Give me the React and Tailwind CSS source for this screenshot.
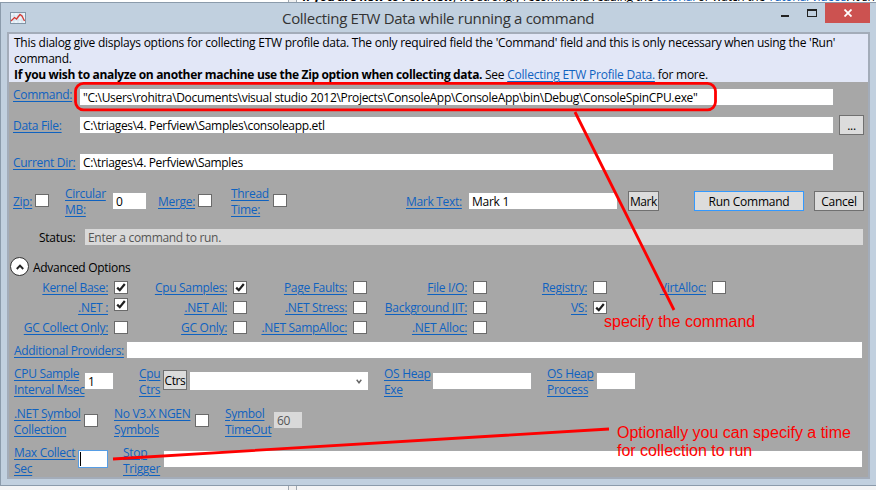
import React from 'react';
import clsx from 'clsx';

function Link({ className, lines, right }) {
  return (
    <div className={clsx('shrink-0 whitespace-nowrap tracking-[-0.3px] text-[#0f62c0]', right && 'text-right', className)}>
      {lines.map((l) => (
        <div key={l} className="h-4 leading-[18px]">
          <span className="underline decoration-1 underline-offset-[1.5px]">{l}</span>
        </div>
      ))}
    </div>
  );
}

function Field({ className, children, disabled }) {
  return (
    <div
      className={clsx(
        'h-4 shrink-0 whitespace-nowrap pl-[3px] leading-[18px]',
        disabled ? 'bg-[#d9d9d9] text-[#555]' : 'bg-white shadow-[0_0_0_1px_#abadb333]',
        className
      )}
    >
      {children}
    </div>
  );
}

function Check({ className, on }) {
  return (
    <div className={clsx('h-[13px] w-[14px] shrink-0 border border-[#6a6a6a] bg-white', className)}>
      {on && (
        <svg viewBox="0 0 12 11" className="block h-[11px] w-3" fill="none" stroke="#1f1f1f" strokeWidth="2.2">
          <path d="M2.2 5.6 L4.8 8.2 L9.8 2" />
        </svg>
      )}
    </div>
  );
}

function Button({ className, children }) {
  return (
    <div className={clsx('flex h-5 shrink-0 items-center justify-center whitespace-nowrap border bg-[#dcdcdc] pt-[2px] leading-4', className)}>
      {children}
    </div>
  );
}

const columns = [
  { w: 'w-[119px]', items: [['Kernel Base:', true], ['.NET :', true], ['GC Collect Only:', false]] },
  { w: 'w-[119px]', items: [['Cpu Samples:', true], ['.NET All:', false], ['GC Only:', false]] },
  { w: 'w-[120px]', items: [['Page Faults:', false], ['.NET Stress:', false], ['.NET SampAlloc:', false]] },
  { w: 'w-[120px]', items: [['File I/O:', false], ['Background JIT:', false], ['.NET Alloc:', false]] },
  { w: 'w-[120px]', items: [['Registry:', false], ['VS:', true]] },
  { w: 'w-[119px]', items: [['VirtAlloc:', false]] },
];

export default function App() {
  return (
    <div className="relative h-[490px] w-[876px] overflow-hidden bg-white font-['Open_Sans','Noto_Sans',sans-serif] text-[12px] tracking-[-0.25px] text-black">
      <div className="flex h-[2px] overflow-hidden">
        <div className="ml-[288px] w-[9px] shrink-0 border-x border-[#a0a8b0] bg-[#f0f0f0]" />
        <div className="-mt-[11px] ml-[5px] whitespace-nowrap leading-4">
          <b>If you are new to PerfView</b>, we strongly recommend reading the <span className="text-[#0f62c0]">tutorial</span> or watch the <span className="text-[#0f62c0]">Tutorial videos</span>. It should
        </div>
      </div>

      <div className="h-[484px] border border-r-0 border-[#8b9bab] bg-[#c1d0df]">
        <div className="flex h-[29px]">
          <svg viewBox="0 0 16 12" className="ml-[9px] mt-[9px] h-3 w-4 shrink-0">
            <rect x=".5" y=".5" width="15" height="11" fill="#edf4fa" stroke="#8295a6" />
            <path d="M1 4h14M1 8h14M4 1v10M8 1v10M12 1v10" stroke="#c5d8e8" strokeWidth=".6" />
            <path d="M1 9 L4.5 5.5 L6.5 7 L10 2.5 L12 4 L14.5 9" fill="none" stroke="#d43a34" strokeWidth="1.3" />
          </svg>
          <div className="ml-[256px] mt-1 w-[319px] shrink-0 whitespace-nowrap text-[15px] leading-[22px] tracking-[-0.31px] text-[#333]">
            Collecting ETW Data while running a command
          </div>
          <div className="ml-[180px] mt-[12px] h-[2px] w-2 shrink-0 bg-[#222]" />
          <div className="ml-[18px] mt-[6px] h-[8px] w-[10px] shrink-0 border border-t-2 border-[#222]" />
          <div className="ml-2 flex h-5 w-[45px] shrink-0 items-center justify-center bg-[#cc5250]">
            <svg viewBox="0 0 8 8" className="h-2 w-2" stroke="white" strokeWidth="1.8">
              <path d="M.5 .5 L7.5 7.5 M7.5 .5 L.5 7.5" />
            </svg>
          </div>
        </div>

        <div className="ml-[6px] h-[447px] w-[863px] border-2 border-[#a3acb9] bg-[#a7a7a7]">
          <div className="h-12 bg-[#e2e7f7] pl-[5px] pt-px leading-4">
            <div className="whitespace-nowrap">This dialog give displays options for collecting ETW profile data. The only required field the 'Command' field and this is only necessary when using the 'Run'</div>
            <div>command.</div>
            <div className="whitespace-nowrap">
              <b className="tracking-[-0.34px]">If you wish to analyze on another machine use the Zip option when collecting data.</b> See{' '}
              <span className="tracking-[-0.22px] text-[#0f62c0] underline underline-offset-2">Collecting ETW Profile Data.</span> for more.
            </div>
          </div>

          <div className="flex h-[33px] items-start">
            <Link className="ml-1 mt-1 w-[67px]" lines={['Command:']} />
            <Field className="mt-[7px] w-[753px] tracking-[-0.315px]">"C:\Users\rohitra\Documents\visual studio 2012\Projects\ConsoleApp\ConsoleApp\bin\Debug\ConsoleSpinCPU.exe"</Field>
          </div>
          <div className="flex h-[39px] items-start">
            <Link className="ml-1 mt-[2px] w-[67px]" lines={['Data File:']} />
            <Field className="mt-[2px] w-[753px] tracking-[-0.32px]">C:\triages\4. Perfview\Samples\consoleapp.etl</Field>
            <Button className="ml-[6px] w-[25px] border-[#707070]">...</Button>
          </div>
          <div className="flex h-[31px] items-start">
            <Link className="ml-1 w-[67px]" lines={['Current Dir:']} />
            <Field className="w-[753px] tracking-[-0.34px]">C:\triages\4. Perfview\Samples</Field>
          </div>

          <div className="flex h-[44px] items-start">
            <Link className="ml-1 mt-2 w-[22px]" lines={['Zip:']} />
            <Check className="mt-[9px]" />
            <Link className="ml-4 w-12" lines={['Circular', 'MB:']} />
            <Field className="mt-2 w-[33px]">0</Field>
            <Link className="ml-[12px] mt-2 w-[40px]" lines={['Merge:']} />
            <Check className="mt-[9px]" />
            <Link className="ml-[19px] w-[42px]" lines={['Thread', 'Time:']} />
            <Check className="mt-[9px]" />
            <Link className="ml-[119px] mt-2 w-[63px]" lines={['Mark Text:']} />
            <Field className="mt-2 w-[148px]">Mark 1</Field>
            <Button className="ml-[11px] mt-[6px] w-[31px] border-[#707070] tracking-[-0.4px]">Mark</Button>
            <Button className="ml-[35px] mt-[6px] w-[110px] border-[#3399ff]">Run Command</Button>
            <Button className="ml-[10px] mt-[6px] w-[50px] border-[#707070]">Cancel</Button>
          </div>

          <div className="flex h-[28px] items-start">
            <div className="ml-[30px] w-[46px] leading-[18px]">Status:</div>
            <Field disabled className="w-[778px] tracking-[-0.3px]">Enter a command to run.</Field>
          </div>

          <div className="flex h-[22px] items-start">
            <div className="ml-[1px] flex h-[19px] w-[19px] shrink-0 items-center justify-center rounded-full border border-[#333] bg-white">
              <svg viewBox="0 0 8 6" className="h-[6px] w-2" fill="none" stroke="#222" strokeWidth="1.9">
                <path d="M.8 5 L4 1.6 L7.2 5" />
              </svg>
            </div>
            <div className="ml-1 mt-[2px] leading-[18px] tracking-[-0.3px]">Advanced Options</div>
          </div>

          <div className="flex h-[62px] items-start">
            {columns.map((c, i) => (
              <div key={i} className={clsx('flex shrink-0 flex-col', c.w)}>
                {c.items.map(([label, on]) => (
                  <div key={label} className="flex h-5 items-start justify-end">
                    <Link right className="mr-[6px]" lines={[label]} />
                    <Check on={on} className={label === '.NET :' ? '-mt-px' : 'mt-[2px]'} />
                  </div>
                ))}
              </div>
            ))}
          </div>

          <div className="flex h-[24px] items-start">
            <Link className="ml-[5px] mt-px w-[113px]" lines={['Additional Providers:']} />
            <Field className="mt-px w-[735px]" />
          </div>

          <div className="flex h-[40px] items-start">
            <Link className="ml-[5px] w-[71px]" lines={['CPU Sample', 'Interval Msec']} />
            <Field className="mt-2 w-[28px]">1</Field>
            <Link className="ml-[26px] w-6" lines={['Cpu', 'Ctrs']} />
            <Button className="mt-[5px] w-6 border-[#707070] tracking-[-0.4px]">Ctrs</Button>
            <div className="ml-[3px] mt-[7px] flex h-[18px] w-[178px] shrink-0 items-center justify-end bg-white pr-[6px]">
              <svg viewBox="0 0 6 5" className="h-[5px] w-[6px]" fill="none" stroke="#666" strokeWidth="1.4">
                <path d="M.7 .8 L3 3.8 L5.3 .8" />
              </svg>
            </div>
            <Link className="ml-4 w-[49px]" lines={['OS Heap', 'Exe']} />
            <Field className="mt-2 w-[98px]" />
            <Link className="ml-4 w-[50px]" lines={['OS Heap', 'Process']} />
            <Field className="mt-2 w-[38px]" />
          </div>

          <div className="flex h-[39px] items-start">
            <Link className="ml-[5px] w-[70px]" lines={['.NET Symbol', 'Collection']} />
            <Check className="mt-[9px]" />
            <Link className="ml-4 w-[81px]" lines={['No V3.X NGEN', 'Symbols']} />
            <Check className="mt-[9px]" />
            <Link className="ml-4 w-[49px]" lines={['Symbol', 'TimeOut']} />
            <Field disabled className="mt-[7px] w-[28px]">60</Field>
          </div>

          <div className="flex h-[32px] items-start">
            <Link className="ml-[5px] w-[64px]" lines={['Max Collect', 'Sec']} />
            <div className="mt-[6px] h-[18px] w-[30px] shrink-0 border border-[#569de5] bg-white p-px">
              <div className="h-full w-px bg-black" />
            </div>
            <Link className="ml-[15px] w-[41px]" lines={['Stop', 'Trigger']} />
            <Field className="mt-[7px] w-[698px]" />
          </div>
        </div>
      </div>
      <div className="h-1 bg-[#f4f5f6]">
        <div className="ml-[288px] h-full w-[9px] border-x border-[#a0a8b0] bg-[#f0f0f0]" />
      </div>

      <svg viewBox="0 0 876 490" className="absolute inset-0 h-[490px] w-[876px]" fill="none" stroke="#fe0000" strokeWidth="2.8">
        <rect x="75.5" y="83.3" width="640" height="26.5" rx="8" />
        <path d="M575 112 L674 310 M113 459 L609 429" />
      </svg>
      <div className="absolute left-[604px] top-[313px] whitespace-nowrap font-['Liberation_Sans',Arial,sans-serif] text-[16px] leading-[18px] tracking-normal text-[#fe0000]">
        specify the command
      </div>
      <div className="absolute left-[617px] top-[424px] whitespace-nowrap font-['Liberation_Sans',Arial,sans-serif] text-[16px] leading-[18px] tracking-normal text-[#fe0000]">
        Optionally you can specify a time<br />for collection to run
      </div>
    </div>
  );
}
